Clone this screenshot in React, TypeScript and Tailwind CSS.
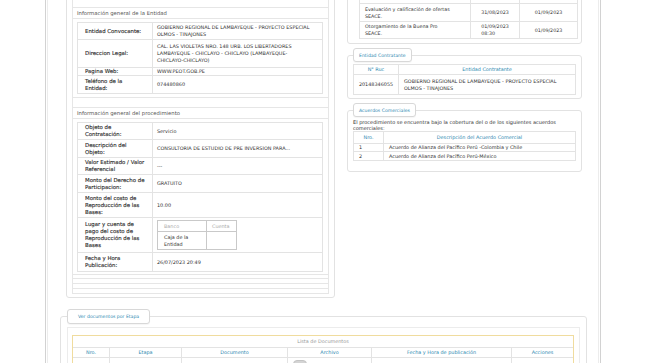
import { FunctionComponent, ReactNode } from "react";

type RowProps = { label: ReactNode; h: string; children?: ReactNode };

const InfoRow: FunctionComponent<RowProps> = ({ label, h, children }) => (
  <div className={`flex border-b border-[#e3e3e3] ${h}`}>
    <div className="w-[75px] shrink-0 border-r border-[#e3e3e3] flex items-center pl-[7px] text-[5.4px] text-[#2a2a2a] [-webkit-text-stroke:0.12px_#2a2a2a] whitespace-nowrap">
      <div>{label}</div>
    </div>
    <div className="flex-1 flex items-center pl-[4px] whitespace-nowrap">{children}</div>
  </div>
);

const SectionHeader: FunctionComponent<{ title: string }> = ({ title }) => (
  <div className="h-[11px] border-b border-[#e6e6e6] flex items-center pl-[4px] text-[5.3px] text-[#555]">
    {title}
  </div>
);

const Legend: FunctionComponent<{ title: string; wide?: boolean }> = ({ title, wide }) => (
  <legend
    className={`border border-[#d8d8d8] rounded-[3px] bg-white text-[#2d88b0] text-[4.6px] flex items-center shadow-[0_1px_1px_rgba(0,0,0,0.04)] ${
      wide ? "h-[15px] px-[10px]" : "h-[14px] px-[5px]"
    }`}
  >
    {title}
  </legend>
);

const App: FunctionComponent = () => {
  return (
    <div className="w-[645px] h-[363px] overflow-hidden bg-white font-['DejaVu_Sans',sans-serif] text-[4.9px] leading-[7px] text-[#333]">
      <div className="ml-[45px] w-[556px] h-[430px] -mt-[30px] border-x border-[#d2d2d2]">
        <div className="mx-px h-full border-x border-[#ececec] pl-[12px] pr-[11px]">
          {/* top row */}
          <div className="flex items-start gap-[12px] pl-[6px]">
            {/* left panel */}
            <div className="w-[269px] border border-[#e2e2e2] rounded-[3px] px-[5px] pt-[5px] pb-[3px]">
              <div className="border border-[#e6e6e6]">
                <div className="h-[31px] border-b border-[#e6e6e6]"></div>
                <SectionHeader title="Información general de la Entidad" />
                <div className="h-[79px] border-b border-[#e6e6e6] pt-[3px] pl-[4px] pr-[5px]">
                  <div className="border-x border-t border-[#e3e3e3]">
                    <InfoRow label="Entidad Convocante:" h="h-[17px]">
                      <div>
                        GOBIERNO REGIONAL DE LAMBAYEQUE - PROYECTO ESPECIAL
                        <br />
                        OLMOS - TINAJONES
                      </div>
                    </InfoRow>
                    <InfoRow label="Direccion Legal:" h="h-[28px]">
                      <div>
                        CAL. LAS VIOLETAS NRO. 148 URB. LOS LIBERTADORES
                        <br />
                        LAMBAYEQUE - CHICLAYO - CHICLAYO (LAMBAYEQUE-
                        <br />
                        CHICLAYO-CHICLAYO)
                      </div>
                    </InfoRow>
                    <InfoRow label="Pagina Web:" h="h-[8px]">
                      WWW.PEOT.GOB.PE
                    </InfoRow>
                    <InfoRow
                      label={
                        <>
                          Teléfono de la
                          <br />
                          Entidad:
                        </>
                      }
                      h="h-[18px]"
                    >
                      074480860
                    </InfoRow>
                  </div>
                </div>
                <div className="h-[10px] border-b border-[#e6e6e6]"></div>
                <SectionHeader title="Información general del procedimiento" />
                <div className="h-[156px] border-b border-[#e6e6e6] pt-[3px] pl-[4px] pr-[5px]">
                  <div className="border-x border-t border-[#e3e3e3]">
                    <InfoRow
                      label={
                        <>
                          Objeto de
                          <br />
                          Contratación:
                        </>
                      }
                      h="h-[17px]"
                    >
                      Servicio
                    </InfoRow>
                    <InfoRow
                      label={
                        <>
                          Descripción del
                          <br />
                          Objeto:
                        </>
                      }
                      h="h-[18px]"
                    >
                      CONSULTORIA DE ESTUDIO DE PRE INVERSION PARA...
                    </InfoRow>
                    <InfoRow
                      label={
                        <>
                          Valor Estimado / Valor
                          <br />
                          Referencial
                        </>
                      }
                      h="h-[17px]"
                    >
                      ---
                    </InfoRow>
                    <InfoRow
                      label={
                        <>
                          Monto del Derecho de
                          <br />
                          Participacion:
                        </>
                      }
                      h="h-[18px]"
                    >
                      GRATUITO
                    </InfoRow>
                    <InfoRow
                      label={
                        <>
                          Monto del costo de
                          <br />
                          Reproducción de las
                          <br />
                          Bases:
                        </>
                      }
                      h="h-[25px]"
                    >
                      10.00
                    </InfoRow>
                    <InfoRow
                      label={
                        <>
                          Lugar y cuenta de
                          <br />
                          pago del costo de
                          <br />
                          Reproducción de las
                          <br />
                          Bases
                        </>
                      }
                      h="h-[35px]"
                    >
                      <div className="w-[80px] border border-[#c9c9c9]">
                        <div className="flex h-[11px] border-b border-[#c9c9c9] text-[#aaa]">
                          <div className="w-[49px] border-r border-[#c9c9c9] pl-[6px] flex items-center">Banco</div>
                          <div className="flex-1 pl-[5px] flex items-center">Cuenta</div>
                        </div>
                        <div className="flex h-[17px]">
                          <div className="w-[49px] border-r border-[#c9c9c9] pl-[6px] flex items-center">
                            <div>
                              Caja de la
                              <br />
                              Entidad
                            </div>
                          </div>
                          <div className="flex-1"></div>
                        </div>
                      </div>
                    </InfoRow>
                    <InfoRow
                      label={
                        <>
                          Fecha y Hora
                          <br />
                          Publicación:
                        </>
                      }
                      h="h-[19px]"
                    >
                      26/07/2023 20:49
                    </InfoRow>
                  </div>
                </div>
                <div className="h-[4px] border-b border-[#e6e6e6]"></div>
                <div className="h-[5px] border-b border-[#e6e6e6]"></div>
                <div className="h-[5px] border-b border-[#e6e6e6]"></div>
                <div className="h-[4px]"></div>
              </div>
            </div>

            {/* right column */}
            <div className="w-[235px] flex flex-col">
              <div className="h-[74px] border border-[#e2e2e2] rounded-[3px] pl-[11px] pr-[3px] pt-[4px]">
                <div className="border-x border-t border-[#e3e3e3] text-[4.8px]">
                  <div className="flex h-[28px] border-b border-[#e3e3e3]">
                    <div className="w-[111px] border-r border-[#e3e3e3]"></div>
                    <div className="w-[49px] border-r border-[#e3e3e3]"></div>
                    <div className="flex-1"></div>
                  </div>
                  <div className="flex h-[18px] border-b border-[#e3e3e3]">
                    <div className="w-[111px] border-r border-[#e3e3e3] pl-[5px] flex items-center">
                      <div>
                        Evaluación y calificación de ofertas
                        <br />
                        SEACE.
                      </div>
                    </div>
                    <div className="w-[49px] border-r border-[#e3e3e3] flex items-center justify-center">31/08/2023</div>
                    <div className="flex-1 flex items-center justify-center">01/09/2023</div>
                  </div>
                  <div className="flex h-[17px] border-b border-[#e3e3e3]">
                    <div className="w-[111px] border-r border-[#e3e3e3] pl-[5px] flex items-center">
                      <div>
                        Otorgamiento de la Buena Pro
                        <br />
                        SEACE.
                      </div>
                    </div>
                    <div className="w-[49px] border-r border-[#e3e3e3] flex items-center justify-center">
                      <div>
                        01/09/2023
                        <br />
                        08:30
                      </div>
                    </div>
                    <div className="flex-1 flex items-center justify-center">01/09/2023</div>
                  </div>
                </div>
              </div>

              <fieldset className="mt-[4px] border border-[#e2e2e2] rounded-[3px] px-[5px] pb-[3px]">
                <Legend title="Entidad Contratante" />
                <div className="mt-[2px] border-x border-t border-[#e3e3e3]">
                  <div className="flex h-[10px] border-b border-[#e3e3e3] text-[#2d88b0]">
                    <div className="w-[45px] border-r border-[#e3e3e3] flex items-center justify-center">N° Ruc</div>
                    <div className="flex-1 flex items-center justify-center">Entidad Contratante</div>
                  </div>
                  <div className="flex h-[20px] border-b border-[#e3e3e3]">
                    <div className="w-[45px] border-r border-[#e3e3e3] flex items-center justify-center">20148346055</div>
                    <div className="flex-1 flex items-center pl-[5px] whitespace-nowrap">
                      <div>
                        GOBIERNO REGIONAL DE LAMBAYEQUE - PROYECTO ESPECIAL
                        <br />
                        OLMOS - TINAJONES
                      </div>
                    </div>
                  </div>
                </div>
              </fieldset>

              <fieldset className="mt-[4px] border border-[#e2e2e2] rounded-[3px] px-[5px] pb-[10px]">
                <Legend title="Acuerdos Comerciales" />
                <div className="mt-[2px] text-[5px] leading-[6px] text-[#333]">
                  El procedimiento se encuentra bajo la cobertura del o de los siguientes acuerdos
                  <br />
                  comerciales:
                </div>
                <div className="border-x border-t border-[#e3e3e3]">
                  <div className="flex h-[12px] border-b border-[#e3e3e3] text-[#2d88b0]">
                    <div className="w-[30px] border-r border-[#e3e3e3] flex items-center justify-center">Nro.</div>
                    <div className="flex-1 flex items-center justify-center">Descripción del Acuerdo Comercial</div>
                  </div>
                  <div className="flex h-[8px] border-b border-[#e3e3e3]">
                    <div className="w-[30px] border-r border-[#e3e3e3] flex items-center pl-[5px]">1</div>
                    <div className="flex-1 flex items-center pl-[5px]">
                      Acuerdo de Alianza del Pacífico Perú -Colombia y Chile
                    </div>
                  </div>
                  <div className="flex h-[9px] border-b border-[#e3e3e3]">
                    <div className="w-[30px] border-r border-[#e3e3e3] flex items-center pl-[5px]">2</div>
                    <div className="flex-1 flex items-center pl-[5px]">Acuerdo de Alianza del Pacífico Perú-México</div>
                  </div>
                </div>
              </fieldset>
            </div>
          </div>

          {/* documentos */}
          <fieldset className="mt-[11px] border border-[#e2e2e2] rounded-[3px] px-[6px] pb-[10px]">
            <Legend title="Ver documentos por Etapa" wide />
            <div className="mt-[3px] border border-[#ececec] pl-[4px] pr-[5px] pt-[7px] pb-[6px]">
              <div className="border border-[#f0dc9e]">
                <div className="h-[12px] border-b border-[#e3e3e3] flex items-center justify-center text-[#999]">
                  Lista de Documentos
                </div>
                <div className="flex h-[10px] border-b border-[#e3e3e3] text-[#2d88b0]">
                  <div className="w-[37px] border-r border-[#e3e3e3] flex items-center justify-center">Nro.</div>
                  <div className="w-[72px] border-r border-[#e3e3e3] flex items-center justify-center">Etapa</div>
                  <div className="w-[106px] border-r border-[#e3e3e3] flex items-center justify-center">Documento</div>
                  <div className="w-[84px] border-r border-[#e3e3e3] flex items-center justify-center">Archivo</div>
                  <div className="w-[140px] border-r border-[#e3e3e3] flex items-center justify-center">
                    Fecha y Hora de publicación
                  </div>
                  <div className="flex-1 flex items-center justify-center">Acciones</div>
                </div>
                <div className="flex h-[20px]">
                  <div className="w-[37px] border-r border-[#e3e3e3]"></div>
                  <div className="w-[72px] border-r border-[#e3e3e3]"></div>
                  <div className="w-[106px] border-r border-[#e3e3e3]"></div>
                  <div className="w-[84px] border-r border-[#e3e3e3] pl-[5px] pt-[2px]">
                    <div className="w-[14px] h-[9px] rounded-[4px] bg-[#d4d4d4] border border-[#c4c4c4]"></div>
                  </div>
                  <div className="w-[140px] border-r border-[#e3e3e3]"></div>
                  <div className="flex-1"></div>
                </div>
              </div>
            </div>
          </fieldset>
        </div>
      </div>
    </div>
  );
};

export default App;
